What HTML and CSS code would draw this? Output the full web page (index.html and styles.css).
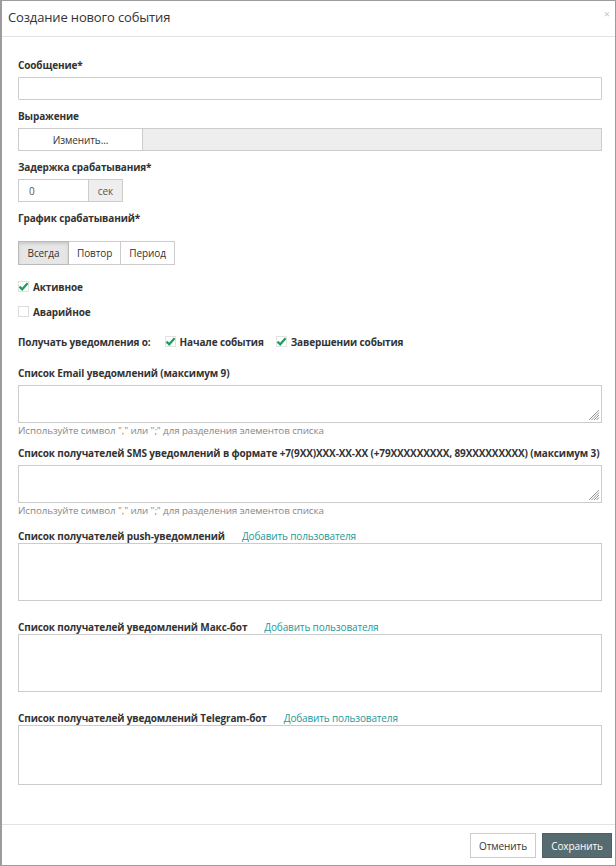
FILE: index.html
```html
<!DOCTYPE html>
<html lang="ru">
<head>
<meta charset="utf-8">
<link rel="stylesheet" href="styles.css">
</head>
<body>
<div class="modal">
  <div class="modal-header">
    <span class="modal-title">Создание нового события</span>
    <span class="close">×</span>
  </div>
  <div class="modal-body">
    <div class="group g-msg">
      <div class="label">Сообщение*</div>
      <div class="input"></div>
    </div>
    <div class="group g-expr">
      <div class="label">Выражение</div>
      <div class="expr-row">
        <div class="btn expr-btn">Изменить...</div>
        <div class="expr-field"></div>
      </div>
    </div>
    <div class="group g-delay">
      <div class="label">Задержка срабатывания*</div>
      <div class="delay-row">
        <div class="delay-input">0</div>
        <div class="addon">сек</div>
      </div>
    </div>
    <div class="group g-sched">
      <div class="label sched-label">График срабатываний*</div>
      <div class="btn-group">
        <div class="btn seg active">Всегда</div>
        <div class="btn seg">Повтор</div>
        <div class="btn seg">Период</div>
      </div>
    </div>
    <div class="check-line c-active">
      <span class="cb"><svg width="11" height="11" viewBox="0 0 11 11"><rect x="0.5" y="0.5" width="10" height="10" fill="#fff" stroke="#e2e2e2"/><path d="M1.5 5.6 L4.2 8.3 L9.6 2.2" fill="none" stroke="#1e9e5e" stroke-width="2.2"/></svg></span>
      <span class="cb-text">Активное</span>
    </div>
    <div class="check-line c-alarm">
      <span class="cb"><svg width="11" height="11" viewBox="0 0 11 11"><rect x="0.5" y="0.5" width="10" height="10" fill="#fff" stroke="#dcdcdc"/></svg></span>
      <span class="cb-text">Аварийное</span>
    </div>
    <div class="notify-line">
      <span class="cb-text notify-label">Получать уведомления о:</span>
      <span class="cb"><svg width="11" height="11" viewBox="0 0 11 11"><rect x="0.5" y="0.5" width="10" height="10" fill="#fff" stroke="#e2e2e2"/><path d="M1.5 5.6 L4.2 8.3 L9.6 2.2" fill="none" stroke="#1e9e5e" stroke-width="2.2"/></svg></span>
      <span class="cb-text">Начале события</span>
      <span class="cb cb-gap"><svg width="11" height="11" viewBox="0 0 11 11"><rect x="0.5" y="0.5" width="10" height="10" fill="#fff" stroke="#e2e2e2"/><path d="M1.5 5.6 L4.2 8.3 L9.6 2.2" fill="none" stroke="#1e9e5e" stroke-width="2.2"/></svg></span>
      <span class="cb-text">Завершении события</span>
    </div>
    <div class="group g-email">
      <div class="label">Список Email уведомлений (максимум 9)</div>
      <div class="textarea"><span class="grip"><svg width="12" height="12" viewBox="0 0 12 12"><path d="M11 1 L1 11 M11 3.5 L3.5 11 M11 6 L6 11 M11 8.5 L8.5 11" stroke="#888" stroke-width="0.9"/></svg></span></div>
      <div class="help">Используйте символ "," или ";" для разделения элементов списка</div>
    </div>
    <div class="group g-sms">
      <div class="label">Список получателей SMS уведомлений в формате +7(9XX)XXX-XX-XX (+79XXXXXXXXX, 89XXXXXXXXX) (максимум 3)</div>
      <div class="textarea"><span class="grip"><svg width="12" height="12" viewBox="0 0 12 12"><path d="M11 1 L1 11 M11 3.5 L3.5 11 M11 6 L6 11 M11 8.5 L8.5 11" stroke="#888" stroke-width="0.9"/></svg></span></div>
      <div class="help">Используйте символ "," или ";" для разделения элементов списка</div>
    </div>
    <div class="group g-push">
      <div class="label-row"><span class="label">Список получателей push-уведомлений</span><span class="link">Добавить пользователя</span></div>
      <div class="box"></div>
    </div>
    <div class="group g-max">
      <div class="label-row"><span class="label">Список получателей уведомлений Макс-бот</span><span class="link">Добавить пользователя</span></div>
      <div class="box"></div>
    </div>
    <div class="group g-tg">
      <div class="label-row"><span class="label">Список получателей уведомлений Telegram-бот</span><span class="link">Добавить пользователя</span></div>
      <div class="box box-tg"></div>
    </div>
  </div>
  <div class="modal-footer">
    <div class="btn btn-cancel">Отменить</div>
    <div class="btn btn-save">Сохранить</div>
  </div>
</div>
</body>
</html>
```
FILE: styles.css
```css
* { box-sizing: border-box; }
html, body { margin: 0; padding: 0; background: #fff; }
body { font-family: "Open Sans", "Noto Sans", sans-serif; color: #333; }

.modal {
  width: 616px;
  height: 866px;
  border: 1px solid #9c9c9c;
  border-left-width: 2px;
  display: flex;
  flex-direction: column;
  background: #fff;
}

.modal-header {
  height: 36px;
  border-bottom: 1px solid #e3e3e3;
  display: flex;
  align-items: center;
  justify-content: space-between;
  padding: 0 5px 4px 6px;
  flex: none;
}
.modal-title { font-size: 13px; color: #333; letter-spacing: -0.15px; }
.close { font-size: 11px; color: #c8c8c8; align-self: flex-start; margin-top: 5px; }

.modal-body {
  flex: 1;
  padding: 21px 13px 0 16px;
}

.label {
  font-size: 10px;
  font-weight: 700;
  line-height: 15px;
  color: #333;
  margin-bottom: 4px;
  letter-spacing: -0.13px;
}
.group { margin-bottom: 9px; }

.input {
  height: 23px;
  border: 1px solid #ccc;
  border-radius: 1px;
}

.btn {
  font-size: 10px;
  color: #333;
  display: flex;
  align-items: center;
  justify-content: center;
  border: 1px solid #ccc;
  background: #fff;
  letter-spacing: -0.1px;
}

.expr-row { display: flex; height: 23px; }
.expr-btn { width: 124px; border-right: none; }
.expr-field { flex: 1; background: #eee; border: 1px solid #ccc; }

.delay-row { display: flex; height: 23px; width: 105px; }
.delay-input {
  width: 71px;
  border: 1px solid #ccc;
  font-size: 10px;
  padding-left: 10px;
  display: flex;
  align-items: center;
  color: #555;
}
.addon {
  width: 34px;
  border: 1px solid #ccc;
  border-left: none;
  background: #eee;
  font-size: 10px;
  display: flex;
  align-items: center;
  justify-content: center;
  color: #555;
}

.g-sched { margin-bottom: 14px; }
.sched-label { margin-top: 3px; margin-bottom: 15px; }
.btn-group { display: flex; height: 24px; }
.seg { padding: 0 8px; }
.seg + .seg { border-left: none; }
.seg.active { background: #e6e6e6; box-shadow: inset 0 2px 3px rgba(0,0,0,0.12); border-color: #bbb; width: 51px; }

.check-line, .notify-line {
  display: flex;
  align-items: center;
  height: 15px;
  font-size: 10px;
  font-weight: 700;
  letter-spacing: -0.13px;
}
.c-active { margin-bottom: 10px; }
.c-alarm { margin-bottom: 15px; }
.notify-line { margin-bottom: 17px; }
.cb { display: inline-flex; width: 11px; height: 11px; margin-right: 4px; }
.notify-label { margin-right: 14px; }
.cb-gap { margin-left: 12px; }

.textarea {
  height: 38px;
  border: 1px solid #ccc;
  position: relative;
}
.grip { position: absolute; right: 1px; bottom: 1px; display: flex; }
.help {
  font-size: 9.8px;
  color: #888;
  line-height: 13px;
  margin-top: 1px;
  letter-spacing: -0.1px;
}
.g-email { margin-bottom: 9px; }
.g-sms { margin-bottom: 12px; }

.label-row { display: flex; align-items: baseline; }
.label-row .label { margin-bottom: 0; line-height: 13px; }
.link { font-size: 10px; color: #1a9a9a; margin-left: 17px; letter-spacing: -0.15px; }
.box { height: 58px; border: 1px solid #ccc; }
.box-tg { height: 60px; }
.g-push, .g-max { margin-bottom: 19px; }

.modal-footer {
  flex: none;
  height: 41px;
  border-top: 1px solid #e3e3e3;
  display: flex;
  justify-content: flex-end;
  align-items: center;
  gap: 6px;
  padding: 1px 3px 0 0;
}
.btn-cancel { width: 66px; height: 25px; }
.btn-save { width: 70px; height: 25px; background: #566b70; color: #fff; border-color: #4d6066; }
```
